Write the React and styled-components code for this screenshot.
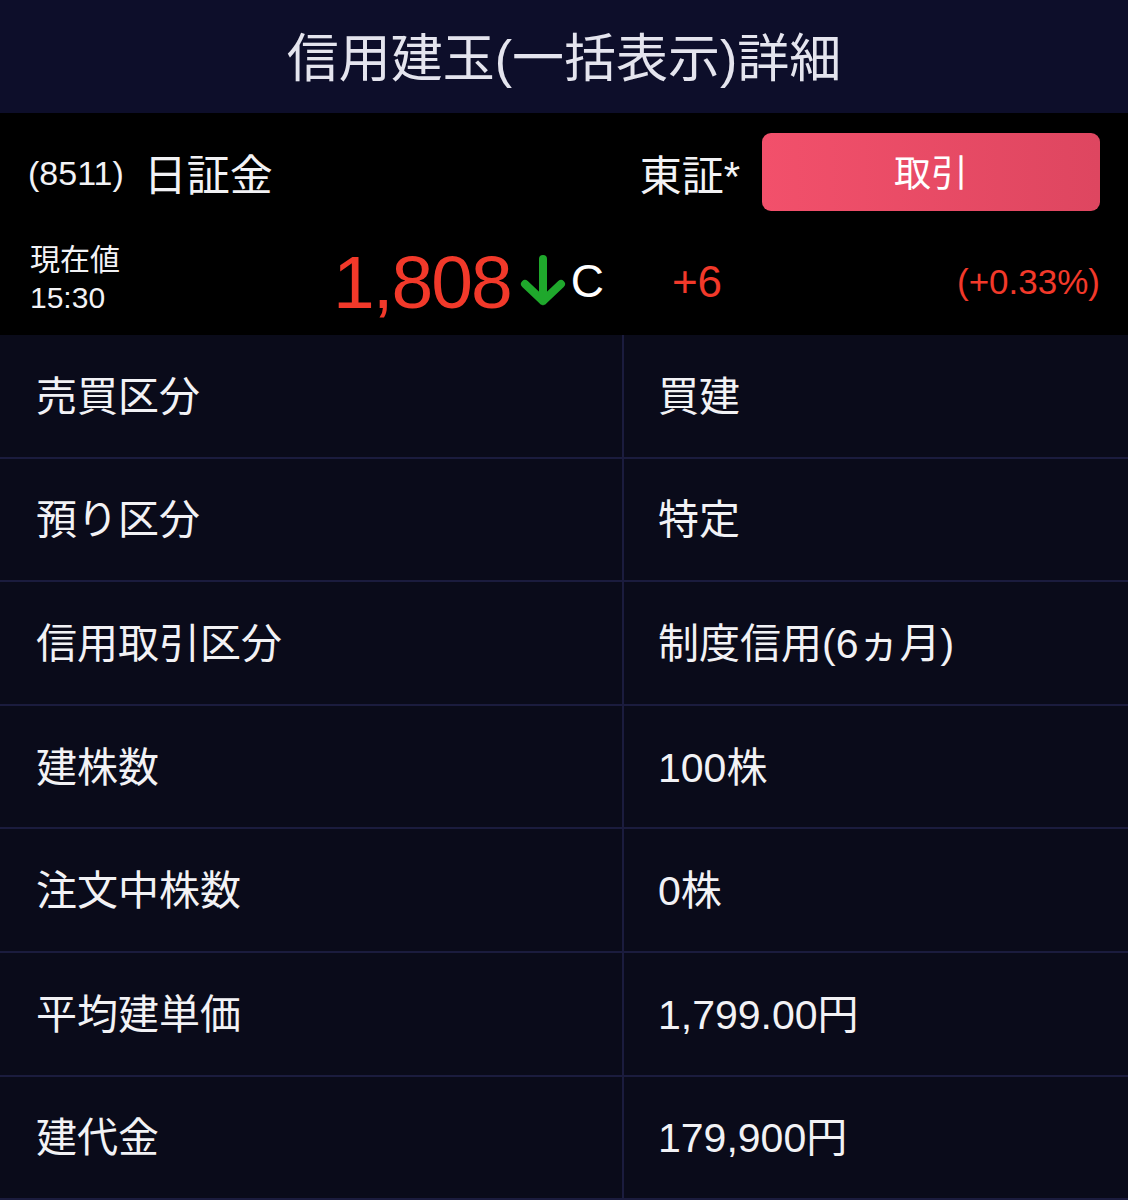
import React from 'react'
import styled, { createGlobalStyle } from 'styled-components'

const GlobalStyle = createGlobalStyle`
  html, body {
    margin: 0;
    padding: 0;
    background: #0a0b1a;
  }
  body {
    font-family: "Liberation Sans", "Noto Sans CJK JP", sans-serif;
    color: #f2f2f5;
  }
`

const FONT = `"Liberation Sans", "Noto Sans CJK JP", sans-serif`

const Page = styled.div`
  width: 1128px;
  height: 1200px;
  overflow: hidden;
  background: #0a0b1a;
`

const TitleBar = styled.header`
  height: 113px;
  background: #0d0e2a;
  display: flex;
  align-items: center;
  justify-content: center;
`

const Title = styled.h1`
  margin: 0;
  font-family: ${FONT};
  font-weight: 400;
  font-size: 52px;
  color: #e4e4ee;
  padding-bottom: 0;
  margin-top: -4px;
`

const Quote = styled.section`
  background: #000;
  height: 222px;
  display: flex;
  flex-direction: column;
`

const QuoteTop = styled.div`
  height: 118px;
  display: flex;
  align-items: center;
  padding: 0 28px 0 28px;
`

const Code = styled.span`
  font-size: 34px;
  margin-right: 20px;
  padding-top: 2px;
`

const Name = styled.span`
  font-size: 43px;
  flex: 1;
`

const Market = styled.span`
  font-size: 42px;
  margin-right: 22px;
`

const TradeButton = styled.button`
  width: 338px;
  height: 78px;
  border: none;
  border-radius: 9px;
  background: linear-gradient(90deg, #f2506b 0%, #de4660 100%);
  color: #fff;
  font-family: ${FONT};
  font-size: 37px;
  padding-bottom: 4px;
`

const QuoteBottom = styled.div`
  flex: 1;
  display: flex;
  align-items: center;
  padding: 0 28px 0 30px;
`

const NowLabel = styled.div`
  width: 303px;
  font-size: 30px;
  line-height: 38px;
  padding-bottom: 8px;
`

const Price = styled.span`
  font-size: 75px;
  letter-spacing: -2px;
  color: #f2392a;
  padding-bottom: 2px;
`

const Arrow = styled.svg`
  width: 48px;
  height: 52px;
  margin: 0 4px 0 8px;
  padding-bottom: 4px;
`

const Flag = styled.span`
  font-size: 46px;
  color: #fff;
  padding-bottom: 4px;
`

const Change = styled.span`
  font-size: 44px;
  color: #f2392a;
  margin-left: 68px;
  flex: 1;
  padding-bottom: 2px;
`

const Ratio = styled.span`
  font-size: 35px;
  color: #f2392a;
  padding-bottom: 2px;
`

const Table = styled.div`
  display: grid;
  grid-template-columns: 624px 1fr;
`

const Cell = styled.div`
  height: 123.6px;
  box-sizing: border-box;
  border-bottom: 2px solid #1b1c3e;
  border-right: ${(p) => (p.left ? '2px solid #1b1c3e' : 'none')};
  background: #0a0b1a;
  display: flex;
  align-items: center;
  padding-left: ${(p) => (p.left ? '36px' : '34px')};
  font-size: 41px;
  color: #f2f2f5;
  padding-bottom: 6px;
`

const rows = [
  ['売買区分', '買建'],
  ['預り区分', '特定'],
  ['信用取引区分', '制度信用(6ヵ月)'],
  ['建株数', '100株'],
  ['注文中株数', '0株'],
  ['平均建単価', '1,799.00円'],
  ['建代金', '179,900円'],
]

export default function App() {
  return (
    <Page>
      <GlobalStyle />
      <TitleBar>
        <Title>信用建玉(一括表示)詳細</Title>
      </TitleBar>
      <Quote>
        <QuoteTop>
          <Code>(8511)</Code>
          <Name>日証金</Name>
          <Market>東証*</Market>
          <TradeButton>取引</TradeButton>
        </QuoteTop>
        <QuoteBottom>
          <NowLabel>
            現在値
            <br />
            15:30
          </NowLabel>
          <Price>1,808</Price>
          <Arrow viewBox="0 0 48 52">
            <path
              d="M24 4 V46 M6 29 L24 46 L42 29"
              fill="none"
              stroke="#1fa82c"
              strokeWidth="8"
              strokeLinecap="round"
              strokeLinejoin="round"
            />
          </Arrow>
          <Flag>C</Flag>
          <Change>+6</Change>
          <Ratio>(+0.33%)</Ratio>
        </QuoteBottom>
      </Quote>
      <Table>
        {rows.map(([label, value]) => (
          <React.Fragment key={label}>
            <Cell left>{label}</Cell>
            <Cell>{value}</Cell>
          </React.Fragment>
        ))}
      </Table>
    </Page>
  )
}
